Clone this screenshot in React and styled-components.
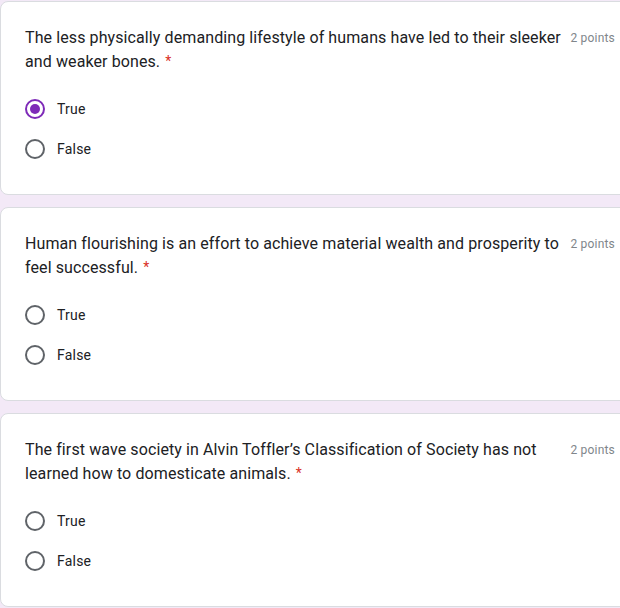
import React from 'react';
import styled, { createGlobalStyle } from 'styled-components';

const GlobalStyle = createGlobalStyle`
  html, body {
    margin: 0;
    padding: 0;
    background: #f3e9f7;
    overflow: hidden;
  }
  body {
    font-family: Roboto, "Liberation Sans", Arial, sans-serif;
    color: #202124;
  }
`;

const Page = styled.div`
  display: flex;
  flex-direction: column;
  gap: 12px;
  padding-top: 1px;
  width: 640px;
`;

const Card = styled.div`
  box-sizing: border-box;
  width: 640px;
  background: #fff;
  border: 1px solid #dadce0;
  border-radius: 8px;
  padding: 24px 24px 25px;
  display: flex;
  flex-direction: column;
  gap: 15px;
`;

const Header = styled.div`
  display: flex;
  align-items: flex-start;
`;

const Title = styled.div`
  flex: 1;
  font-size: 16px;
  line-height: 24px;
  letter-spacing: 0.1px;
  color: #202124;
`;

const Required = styled.span`
  display: inline-block;
  color: #d93025;
  font-size: 14px;
  line-height: 14px;
  padding-left: 5px;
  vertical-align: top;
  margin-top: 4px;
`;

const Points = styled.div`
  flex-shrink: 0;
  margin-left: 8px;
  font-size: 12px;
  line-height: 24px;
  letter-spacing: 0.2px;
  color: #80868b;
`;

const Options = styled.div`
  display: flex;
  flex-direction: column;
`;

const Option = styled.label`
  display: flex;
  align-items: center;
  gap: 12px;
  height: 40px;
  font-size: 14px;
  letter-spacing: 0.2px;
  color: #202124;
`;

const Radio = styled.span`
  box-sizing: border-box;
  width: 20px;
  height: 20px;
  border-radius: 50%;
  border: 2px solid ${({ checked }) => (checked ? '#7e2ab8' : '#5f6368')};
  display: flex;
  align-items: center;
  justify-content: center;

  &::after {
    content: '';
    display: ${({ checked }) => (checked ? 'block' : 'none')};
    width: 10px;
    height: 10px;
    border-radius: 50%;
    background: #7e2ab8;
  }
`;

const questions = [
  {
    id: 1,
    title: 'The less physically demanding lifestyle of humans have led to their sleeker and weaker bones.',
    answer: 'True',
  },
  {
    id: 2,
    title: 'Human flourishing is an effort to achieve material wealth and prosperity to feel successful.',
    answer: null,
  },
  {
    id: 3,
    title: 'The first wave society in Alvin Toffler\u2019s Classification of Society has not learned how to domesticate animals.',
    answer: null,
  },
];

export default function App() {
  return (
    <>
      <GlobalStyle />
      <Page>
        {questions.map((q) => (
          <Card key={q.id}>
            <Header>
              <Title>
                {q.title}
                <Required>*</Required>
              </Title>
              <Points>2 points</Points>
            </Header>
            <Options>
              {['True', 'False'].map((opt) => (
                <Option key={opt}>
                  <Radio checked={q.answer === opt} />
                  {opt}
                </Option>
              ))}
            </Options>
          </Card>
        ))}
      </Page>
    </>
  );
}
